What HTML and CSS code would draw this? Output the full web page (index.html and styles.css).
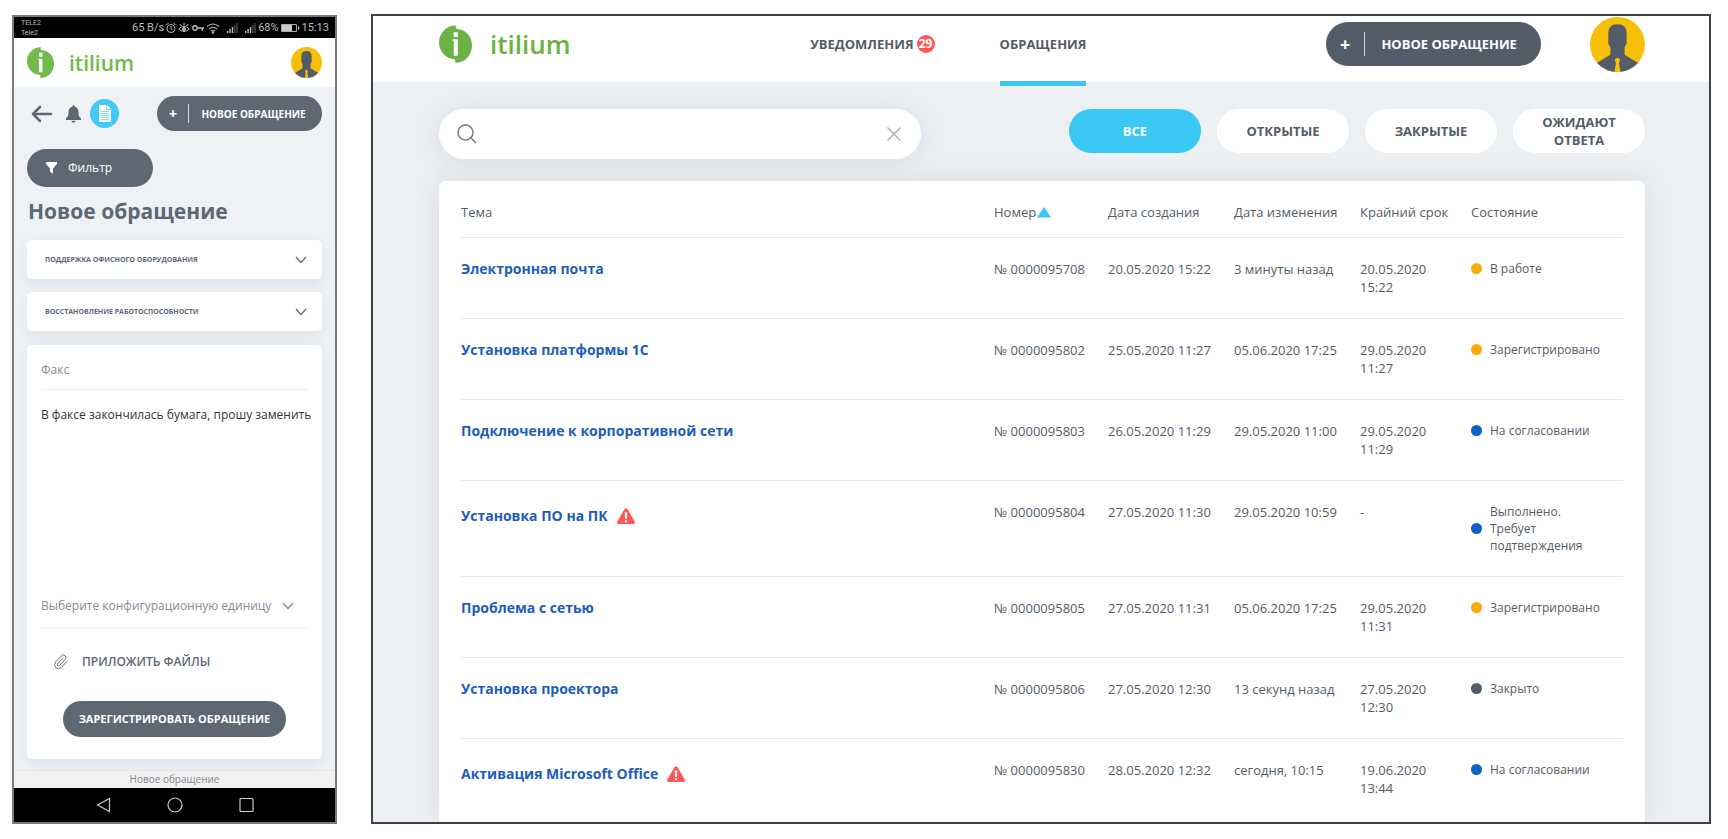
FILE: index.html
```html
<!DOCTYPE html>
<html lang="ru">
<head>
<meta charset="utf-8">
<meta name="viewport" content="width=device-width, initial-scale=1">
<title>Itilium</title>
<link rel="stylesheet" href="styles.css">
</head>
<body>
<svg class="sprite" aria-hidden="true">
  <symbol id="logo" viewBox="0 0 28 32">
    <path fill="currentColor" d="M14 0C6 .5 0 7 0 14.500 0 22.500 6 28.500 13.500 29l.5 3c8 0 14-6.500 14-14.500C28 9 22.500 3.500 14.500 3z"/>
    <path fill="#fff" d="M12.500 6h3.500v4h-3.500zM11.500 12H16v14h-3.500V13.200h-1z"/>
  </symbol>
  <symbol id="avatar" viewBox="0 0 54 54">
    <clipPath id="round"><circle cx="27" cy="27" r="27"/></clipPath>
    <g clip-path="url(#round)">
      <path fill="#f7bf05" d="M0 0h54v54H0z"/>
      <path fill="#535c69" d="M18 16c0-6 3-9 9-9s9 3 9 9v10l-2 4v7l13 8 4 9H3l4-9 13-8v-7l-2-4z"/>
      <path fill="#f7bf05" d="M24.500 42.500c0-3 5-3 5 0l-1 3 1.500 8.500h-6l1.500-8.500z"/>
    </g>
  </symbol>
  <symbol id="chevron" viewBox="0 0 12 8">
    <path fill="none" stroke="currentColor" stroke-width="1.200" d="M1 1l5 5.500L11 1"/>
  </symbol>
  <symbol id="alert" viewBox="0 0 18 16">
    <path fill="#ff5757" d="M7.600 1c.6-1.100 2.200-1.100 2.800 0l7.300 12.500c.6 1.100 0 2.500-1.400 2.500H1.700C.3 16-.3 14.600.3 13.500z"/>
    <path fill="#fff" d="M7.700 4.500h2.600l-.4 6.500H8.100zM7.900 12.200h2.200v2H7.900z"/>
  </symbol>
  <symbol id="signal" viewBox="0 0 12 12">
    <path fill="#bbb" d="M1 9h1.400v2H1zM3.400 7h1.400v4H3.400zM5.800 5h1.400v6H5.800z"/>
    <path fill="#555" d="M8.200 3h1.200v8H8.200zM10.400 1h1.200v10h-1.200z"/>
  </symbol>
</svg>

<main class="stage">
  <section class="phone">
    <div class="status">
      <div class="carriers"><span>TELE2</span><span>Tele2</span></div>
      <div class="indicators">
        <span>65 B/s</span>
        <svg width="10" height="12" viewBox="0 0 10 12" fill="none" stroke="#bbb"><circle cx="5" cy="6.500" r="4"/><path d="M5 4v3l1.500 1M.5 3l2-2M9.500 3l-2-2"/></svg>
        <svg width="12" height="12" viewBox="0 0 12 12" fill="none" stroke="#bbb"><path d="M.7 7Q6 1.500 11.300 7 6 12 .7 7zM6 1v2.500M2 2l1.300 2M10 2L8.700 4"/><circle cx="6" cy="7" r="1.500" fill="#bbb"/></svg>
        <svg width="12" height="12" viewBox="0 0 12 12" fill="none" stroke="#bbb" stroke-width="1.400"><circle cx="3" cy="6" r="2.200"/><path d="M5.200 6H12M10.300 6v3"/></svg>
        <svg width="14" height="12" viewBox="0 0 14 12" fill="none" stroke="#bbb" stroke-width="1.100"><path d="M1 4.500q6-5 12 0M3 7q4-3.500 8 0M5 9q2-1.500 4 0"/><circle cx="7" cy="10.500" r=".7" fill="#bbb"/></svg>
        <svg class="sig" width="12" height="12"><use href="#signal"/></svg>
        <svg class="sig" width="12" height="12"><use href="#signal"/></svg>
        <span>68%</span>
        <svg width="19" height="10" viewBox="0 0 19 10"><path fill="none" stroke="#aaa" d="M.5 1.500h15v7H.5z"/><path fill="#ccc" d="M1 2h10v6H1zM17 3.500h1.200v3H17z"/></svg>
        <span>15:13</span>
      </div>
    </div>

    <header class="phone-head">
      <a class="brand" href="#"><svg class="brand-mark"><use href="#logo"/></svg><span>itilium</span></a>
      <svg class="avatar" role="img" aria-label="Профиль"><use href="#avatar"/></svg>
    </header>

    <div class="phone-body">
      <div class="tools">
        <button class="icon-btn" aria-label="Назад"><svg width="22" height="18" viewBox="0 0 22 18" fill="none" stroke="currentColor" stroke-width="2.600" stroke-linecap="round" stroke-linejoin="round"><path d="M20 9H2M9 2L2 9l7 7"/></svg></button>
        <button class="icon-btn bell" aria-label="Уведомления"><svg width="15" height="18" viewBox="0 0 15 18" fill="currentColor"><path d="M6.300 1.700C6.300-.2 8.700-.2 8.700 1.700 11.700 2.300 12.500 5 12.500 7.500c0 3.500.8 4.500 2.500 5.700V15H0v-1.800c1.700-1.200 2.500-2.200 2.500-5.700 0-2.500.8-5.200 3.800-5.800zM5.500 15.800h4c0 2.600-4 2.600-4 0z"/></svg></button>
        <button class="icon-btn doc" aria-label="Обращения"><svg width="12" height="17" viewBox="0 0 12 17"><path fill="#fff" d="M0 0h8l4 4v13H0z"/><path fill="none" stroke="#43c9f6" d="M7.500 0v4.500H12M2 6.500h8M2 8.500h8M2 10.500h8M2 12.500h8M2 14.500h8" stroke-width=".7"/></svg></button>
        <button class="pill new small"><span class="plus">+</span><span class="sep"></span><span class="grow">Новое обращение</span></button>
      </div>

      <button class="pill filter"><svg width="11" height="12" viewBox="0 0 11 12"><path fill="#fff" d="M0 0h11v2L7 6.500V12l-3-2.500v-3L0 2z"/></svg>Фильтр</button>

      <h1>Новое обращение</h1>

      <form class="request">
        <div class="select-card">
          <select aria-label="Услуга"><option>Поддержка офисного оборудования</option></select>
          <svg class="chev"><use href="#chevron"/></svg>
        </div>
        <div class="select-card">
          <select aria-label="Состав услуги"><option>Восстановление работоспособности</option></select>
          <svg class="chev"><use href="#chevron"/></svg>
        </div>
        <div class="form-card">
          <input class="subject" type="text" value="Факс" aria-label="Тема">
          <textarea class="details" aria-label="Описание">В факсе закончилась бумага, прошу заменить</textarea>
          <div class="unit">
            <select aria-label="Конфигурационная единица"><option>Выберите конфигурационную единицу</option></select>
            <svg class="chev"><use href="#chevron"/></svg>
          </div>
          <button type="button" class="attach"><svg width="14" height="16" viewBox="1 0 22 24" preserveAspectRatio="none" fill="none" stroke="currentColor" stroke-width="1.500"><path d="M21.440 11.050l-9.190 9.190a6 6 0 0 1-8.490-8.490l9.190-9.190a4 4 0 0 1 5.660 5.660l-9.200 9.190a2 2 0 0 1-2.830-2.830l8.490-8.480"/></svg>Приложить файлы</button>
          <button type="button" class="pill submit">Зарегистрировать обращение</button>
        </div>
      </form>
    </div>

    <div class="caption">Новое обращение</div>
    <div class="android">
      <button aria-label="Назад"><svg width="15" height="16" viewBox="0 0 15 16" fill="none" stroke="#ccc" stroke-width="1.200"><path d="M13.500 1.500v13L1.500 8z"/></svg></button>
      <button aria-label="Домой"><svg width="16" height="16" viewBox="0 0 16 16" fill="none" stroke="#ccc" stroke-width="1.200"><circle cx="8" cy="8" r="7"/></svg></button>
      <button aria-label="Недавние"><svg width="15" height="16" viewBox="0 0 15 16" fill="none" stroke="#ccc" stroke-width="1.200"><rect x="1" y="1.500" width="13" height="13" rx="1"/></svg></button>
    </div>
  </section>

  <section class="desktop">
    <header class="desk-head">
      <a class="brand" href="#"><svg class="brand-mark"><use href="#logo"/></svg><span>itilium</span></a>
      <nav class="tabs">
        <a href="#">Уведомления<span class="badge">29</span></a>
        <a href="#" class="active">Обращения</a>
      </nav>
      <button class="pill new"><span class="plus">+</span><span class="sep"></span><span class="grow">Новое обращение</span></button>
      <svg class="avatar" role="img" aria-label="Профиль"><use href="#avatar"/></svg>
    </header>

    <div class="desk-body">
      <div class="controls">
        <div class="search">
          <svg width="20" height="20" viewBox="0 0 20 20" fill="none" stroke="#6d7683" stroke-width="1.400"><circle cx="8.500" cy="8.500" r="7.500"/><path d="M14 14l5 5"/></svg>
          <input type="text" aria-label="Поиск">
          <button aria-label="Очистить"><svg width="14" height="14" viewBox="0 0 14 14" fill="none" stroke="#a3a8b0" stroke-width="1.300"><path d="M.5.500l13 13M13.500.500l-13 13"/></svg></button>
        </div>
        <div class="scopes">
          <button class="on">Все</button>
          <button>Открытые</button>
          <button>Закрытые</button>
          <button>Ожидают ответа</button>
        </div>
      </div>

      <div class="list">
        <table>
          <colgroup><col><col class="c-num"><col class="c-date"><col class="c-date"><col class="c-due"><col class="c-state"></colgroup>
          <thead>
            <tr>
              <th>Тема</th>
              <th><span class="sorted">Номер<svg width="14" height="11" viewBox="0 0 14 11"><path fill="#3bc8f5" d="M7 0l7 10.500H0z"/></svg></span></th>
              <th>Дата создания</th><th>Дата изменения</th><th>Крайний срок</th><th>Состояние</th>
            </tr>
          </thead>
          <tbody>
            <tr><td><a href="#">Электронная почта</a></td><td>№ 0000095708</td><td>20.05.2020 15:22</td><td>3 минуты назад</td><td>20.05.2020 15:22</td><td><span class="state amber">В работе</span></td></tr>
            <tr><td><a href="#">Установка платформы 1С</a></td><td>№ 0000095802</td><td>25.05.2020 11:27</td><td>05.06.2020 17:25</td><td>29.05.2020 11:27</td><td><span class="state amber">Зарегистрировано</span></td></tr>
            <tr><td><a href="#">Подключение к корпоративной сети</a></td><td>№ 0000095803</td><td>26.05.2020 11:29</td><td>29.05.2020 11:00</td><td>29.05.2020 11:29</td><td><span class="state blue">На согласовании</span></td></tr>
            <tr><td><a class="flagged" href="#">Установка ПО на ПК<svg class="alert"><use href="#alert"/></svg></a></td><td>№ 0000095804</td><td>27.05.2020 11:30</td><td>29.05.2020 10:59</td><td>-</td><td><span class="state blue">Выполнено. Требует подтверждения</span></td></tr>
            <tr><td><a href="#">Проблема с сетью</a></td><td>№ 0000095805</td><td>27.05.2020 11:31</td><td>05.06.2020 17:25</td><td>29.05.2020 11:31</td><td><span class="state amber">Зарегистрировано</span></td></tr>
            <tr><td><a href="#">Установка проектора</a></td><td>№ 0000095806</td><td>27.05.2020 12:30</td><td>13 секунд назад</td><td>27.05.2020 12:30</td><td><span class="state slate">Закрыто</span></td></tr>
            <tr><td><a class="flagged" href="#">Активация Microsoft Office<svg class="alert"><use href="#alert"/></svg></a></td><td>№ 0000095830</td><td>28.05.2020 12:32</td><td>сегодня, 10:15</td><td>19.06.2020 13:44</td><td><span class="state blue">На согласовании</span></td></tr>
          </tbody>
        </table>
      </div>
    </div>
  </section>
</main>
</body>
</html>
```
FILE: styles.css
```css
* { box-sizing: border-box; }

body {
  margin: 0;
  background: #fff;
  color: #535c69;
  font: 13px/18px "Open Sans", "Noto Sans", sans-serif;
}

button, input, select, textarea {
  margin: 0;
  padding: 0;
  border: 0;
  background: none;
  color: inherit;
  font: inherit;
  outline: none;
}

button { cursor: pointer; }
select { appearance: none; }
textarea { resize: none; }
svg { display: block; flex: none; }
a { color: inherit; text-decoration: none; }

.sprite { position: absolute; width: 0; height: 0; }

.stage {
  display: grid;
  grid-template-columns: 325px 1fr;
  gap: 34px;
  padding: 14px 17px 16px 12px;
}

/* Shared pieces */

.brand {
  display: flex;
  align-items: center;
  color: #6ab344;
  font-weight: 600;
}

.pill {
  display: flex;
  align-items: center;
  border-radius: 22px;
  background: #535c69;
  color: #fff;
  font-weight: 700;
}

.new { text-transform: uppercase; }
.new .grow { flex: 1; text-align: center; white-space: nowrap; }
.sep { width: 1px; height: 24px; background: #d5d8dc; }

/* Phone */

.phone {
  display: flex;
  flex-direction: column;
  margin-top: 1px;
  border: 2px solid #7b7b7d;
  background: #eef2f5;
  color: #5e6875;
}

.status {
  display: flex;
  justify-content: space-between;
  align-items: center;
  height: 21px;
  padding: 0 6px 0 7px;
  background: #000;
  color: #bbb;
  font: 11px/12px Roboto, sans-serif;
}

.carriers { display: flex; flex-direction: column; font-size: 7px; line-height: 10px; }
.indicators { display: flex; align-items: center; gap: 2px; }
.indicators .sig { margin-left: 4px; }

.phone-head {
  display: flex;
  justify-content: space-between;
  align-items: center;
  height: 49px;
  padding: 0 13px;
  background: #fff;
}

.phone-head .brand { gap: 15px; color: #70bb4c; font-size: 21px; line-height: 28px; }
.phone-head .brand-mark { width: 27px; height: 31px; }
.phone-head .avatar { width: 31px; height: 31px; }

.phone-body {
  flex: 1;
  display: flex;
  flex-direction: column;
  padding: 9px 13px 11px;
}

.phone .pill { background: #5e6875; }

.tools { display: flex; align-items: center; }
.icon-btn { display: flex; margin-left: 4px; }
.icon-btn.bell { margin-left: 13px; }
.icon-btn.doc {
  justify-content: center;
  align-items: center;
  width: 29px;
  height: 29px;
  margin-left: 9px;
  border-radius: 50%;
  background: #43c9f6;
}

.new.small {
  width: 165px;
  height: 35px;
  margin-left: auto;
  padding: 0 4px 0 12px;
  font-size: 10px;
}
.new.small .plus { margin-right: 11px; font-size: 14px; }
.new.small .sep { height: 19px; }

.filter {
  width: 126px;
  height: 38px;
  margin-top: 18px;
  padding-left: 19px;
  gap: 11px;
  font-size: 12px;
  font-weight: 400;
}

.phone h1 {
  margin: 9px 0 14px;
  padding-left: 1px;
  font-size: 21px;
  line-height: 30px;
}

.request { flex: 1; display: flex; flex-direction: column; gap: 13px; }

.select-card, .form-card {
  border-radius: 5px;
  background: #fff;
  box-shadow: 0 4px 14px rgba(83, 92, 105, .1);
}

.select-card { display: flex; align-items: center; height: 39px; padding: 0 15px 0 18px; }
.select-card select {
  flex: 1;
  min-width: 0;
  font-size: 7px;
  font-weight: 700;
  text-transform: uppercase;
}
.chev { width: 12px; height: 8px; }

.form-card {
  flex: 1;
  display: flex;
  flex-direction: column;
  margin-top: 1px;
  padding: 0 14px 22px;
}

.subject {
  width: 100%;
  height: 45px;
  padding-top: 4px;
  border-bottom: 1px solid #eceeef;
  color: #858c96;
  font-size: 12px;
}
.details {
  flex: 1;
  min-height: 190px;
  margin-right: -8px;
  padding-top: 16px;
  color: #333;
  font-size: 12px;
  overflow: hidden;
}
.unit {
  display: flex;
  align-items: center;
  height: 44px;
  padding-right: 14px;
  border-bottom: 2px solid #f3f4f5;
  color: #858c96;
  font-size: 12px;
}
.unit select { flex: 1; min-width: 0; }

.attach {
  display: flex;
  align-items: center;
  align-self: flex-start;
  gap: 14px;
  height: 24px;
  margin: 21px 0 27px 13px;
  font-size: 12px;
  font-weight: 600;
  text-transform: uppercase;
}

.submit {
  align-self: center;
  justify-content: center;
  width: 223px;
  height: 36px;
  font-size: 11px;
  text-transform: uppercase;
}

.caption {
  height: 18px;
  border-top: 1px solid #e0e6ea;
  background: #f1f1f1;
  color: #85878a;
  font-size: 10px;
  line-height: 17px;
  text-align: center;
}

.android {
  display: flex;
  justify-content: center;
  align-items: center;
  gap: 56px;
  height: 34px;
  background: #000;
}

/* Desktop */

.desktop {
  min-width: 0;
  border: 2px solid #3e4147;
  background: #ecf0f3;
}

.desk-head {
  display: flex;
  align-items: center;
  height: 66px;
  padding: 0 64px 10px 66px;
  background: #fff;
}

.desk-head .brand { gap: 18px; font-size: 26px; line-height: 36px; }
.desk-head .brand-mark { width: 33px; height: 38px; }
.desk-head .avatar { width: 55px; height: 55px; margin-left: 49px; }
.desk-head .new { width: 215px; height: 44px; padding: 0 8px 0 14px; font-size: 13px; }
.desk-head .plus { margin-right: 14px; font-size: 18px; }

.tabs {
  flex: 1;
  align-self: stretch;
  display: flex;
  justify-content: center;
  gap: 65px;
  font-weight: 700;
  text-transform: uppercase;
}
.tabs a { position: relative; display: flex; align-items: center; gap: 3px; }
.tabs .active::after {
  content: "";
  position: absolute;
  left: 0;
  right: 0;
  bottom: -14px;
  height: 5px;
  background: #3bc8f5;
}
.badge {
  width: 18px;
  height: 18px;
  border-radius: 50%;
  background: #ff5757;
  color: #fff;
  font-size: 12px;
  text-align: center;
}

.desk-body { padding: 27px 64px 0 66px; }

.controls { display: flex; justify-content: space-between; margin-bottom: 22px; }

.search {
  display: flex;
  align-items: center;
  width: 40%;
  height: 50px;
  padding: 0 20px 0 18px;
  border-radius: 25px;
  background: #fff;
  box-shadow: 0 4px 24px rgba(83, 92, 105, .12);
}
.search input { flex: 1; min-width: 0; padding: 0 12px; }

.scopes { display: flex; gap: 16px; }
.scopes button {
  width: 132px;
  height: 44px;
  padding: 0 20px;
  border-radius: 22px;
  background: #fff;
  font-weight: 700;
  text-transform: uppercase;
}
.scopes .on { background: #3bc8f5; color: #fff; }

.list {
  padding: 0 22px;
  border-radius: 6px 6px 0 0;
  background: #fff;
  box-shadow: 0 0 24px rgba(83, 92, 105, .12);
  clip-path: inset(-30px -30px 0);
}

table { width: 100%; border-collapse: separate; border-spacing: 0; table-layout: fixed; }
.c-num { width: 114px; }
.c-date { width: 126px; }
.c-due { width: 111px; }
.c-state { width: 152px; }

th, td { text-align: left; vertical-align: top; border-bottom: 1px solid #e4e9eb; }
th { padding: 22px 0 16px; font-weight: 400; white-space: nowrap; }
td { padding: 22px 20px 22px 0; }
td:last-child, th:last-child { padding-right: 0; }
tbody tr:last-child td { padding-bottom: 25px; border-bottom: 0; }
td a { color: #1c5dbd; font-size: 14px; font-weight: 700; }

.sorted { display: inline-flex; align-items: center; gap: 1px; }
.flagged { display: flex; align-items: center; gap: 9px; padding-top: 4px; }
.alert { width: 18px; height: 16px; }

.state {
  display: grid;
  grid-template-columns: 12px 1fr;
  align-items: center;
  gap: 7px;
  padding-right: 20px;
  font-size: 12px;
  line-height: 17px;
}
.state::before { content: ""; width: 11px; height: 11px; border-radius: 50%; background: currentColor; }
.amber::before { background: #f8ac05; }
.blue::before { background: #0b62c6; }
.slate::before { background: #535c69; }
```
